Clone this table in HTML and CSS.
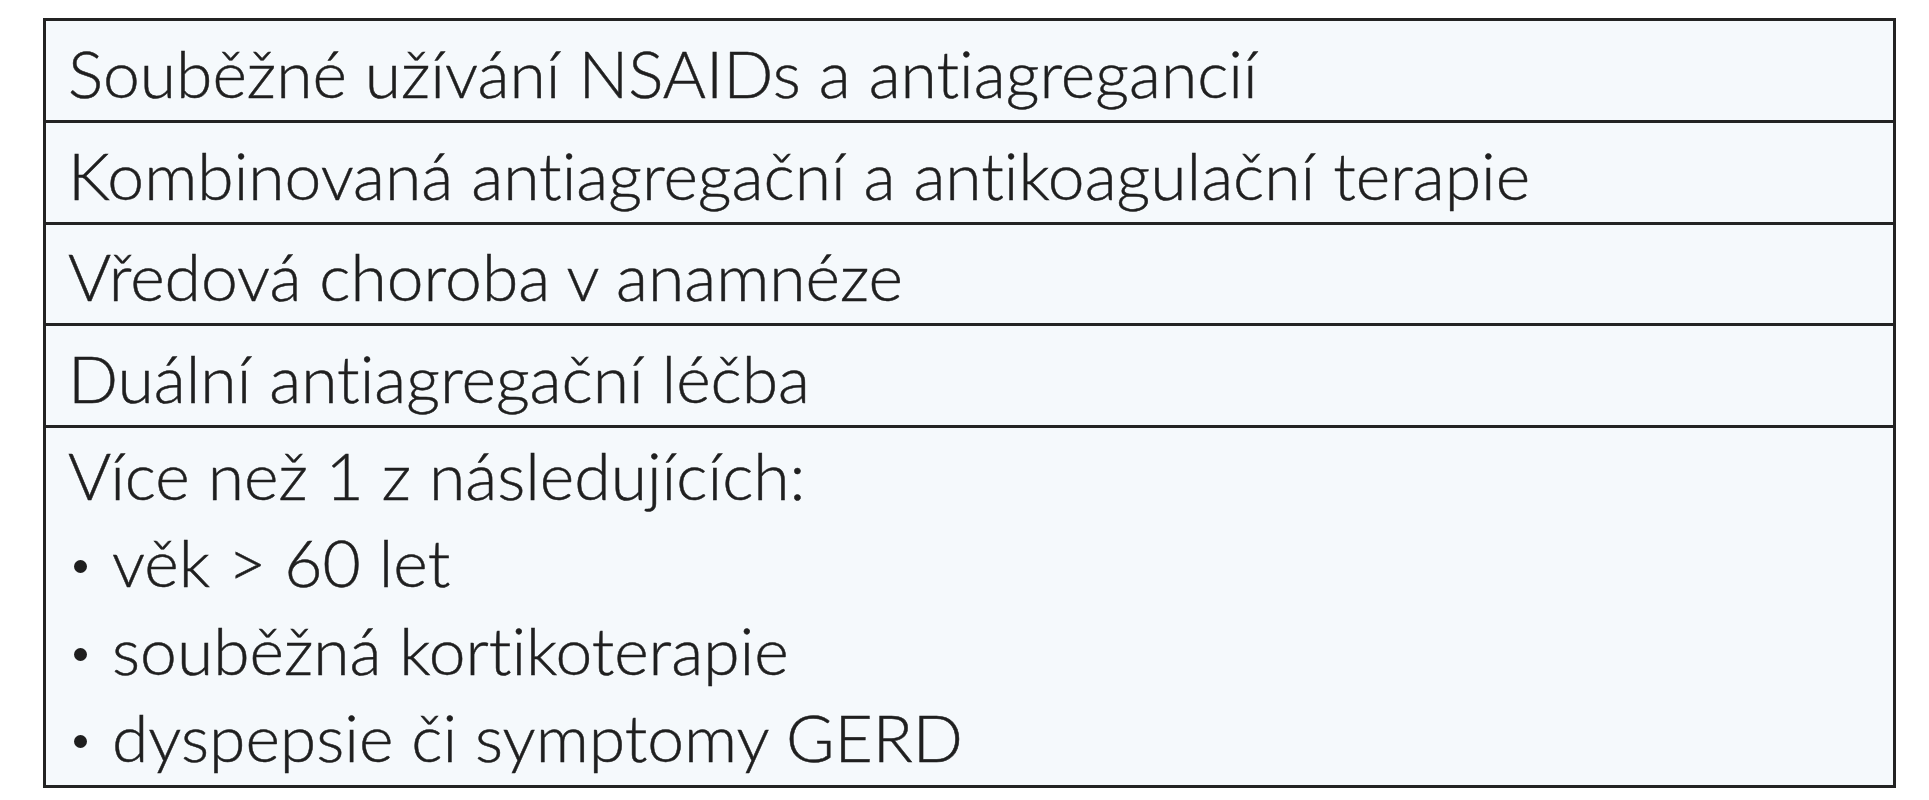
FILE: index.html
```html
<!DOCTYPE html>
<html lang="cs">
<head>
<meta charset="utf-8">
<title>Rizikové faktory</title>
<link rel="stylesheet" href="styles.css">
</head>
<body>
<table class="risk-table">
  <tbody>
    <tr><td class="cell">Souběžné užívání NSAIDs a antiagregancií</td></tr>
    <tr><td class="cell">Kombinovaná antiagregační a antikoagulační terapie</td></tr>
    <tr><td class="cell">Vředová choroba v anamnéze</td></tr>
    <tr><td class="cell">Duální antiagregační léčba</td></tr>
    <tr>
      <td class="cell cell-multi">
        <div class="line">Více než 1 z následujících:</div>
        <ul class="bullets">
          <li class="item">věk &gt; 60 let</li>
          <li class="item">souběžná kortikoterapie</li>
          <li class="item">dyspepsie či symptomy GERD</li>
        </ul>
      </td>
    </tr>
  </tbody>
</table>
</body>
</html>
```

FILE: styles.css
```css
html, body {
  margin: 0;
  padding: 0;
  background: #ffffff;
}

body {
  padding-top: 18px;
  padding-left: 43px;
  font-family: Lato, "Open Sans", "Liberation Sans", sans-serif;
  color: #1f1f1f;
}

.risk-table {
  border-collapse: collapse;
  width: 1853px;
  border: 3px solid #232323;
}

.cell {
  border-top: 3px solid #232323;
  background: #f5f9fc;
  padding: 4.75px 0 0 22px;
  height: 94px;
  font-size: 66px;
  line-height: 94px;
  font-weight: 300;
  -webkit-text-stroke: 0.5px #1f1f1f;
  font-variant-ligatures: none;
  vertical-align: top;
  white-space: nowrap;
}

.cell-multi {
  height: auto;
  padding-top: 2.75px;
  padding-bottom: 4.25px;
  line-height: 87.5px;
}

.line {
  height: 87.5px;
}

.bullets {
  list-style: none;
  margin: 0;
  padding: 0;
}

.item {
  height: 87.5px;
}

.item::before {
  content: "";
  display: inline-block;
  width: 13px;
  height: 13px;
  border-radius: 50%;
  background: #1e1e1e;
  margin-left: 6px;
  margin-right: 25px;
  margin-bottom: 14px;
  vertical-align: baseline;
}
```
